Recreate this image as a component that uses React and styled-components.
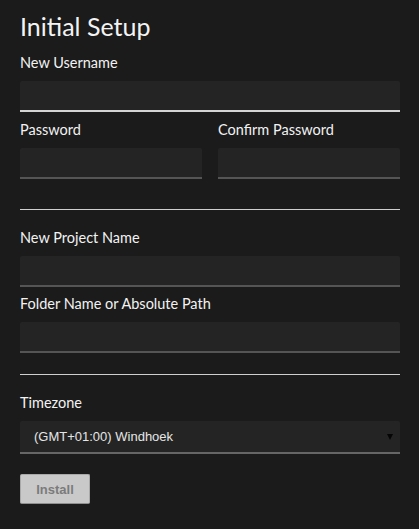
import React from "react"
import styled, { createGlobalStyle } from "styled-components"

const Global = createGlobalStyle`
  html, body {
    margin: 0;
    padding: 0;
    background: #1b1b1b;
  }
  body {
    font-family: Lato, "Open Sans", sans-serif;
    color: #f2f2f2;
  }
`

const Page = styled.div`
  padding: 11px 19px 24px 20px;
  display: flex;
  flex-direction: column;
`

const Title = styled.h1`
  margin: 0 0 13px;
  font-size: 25px;
  font-weight: 400;
  line-height: 30px;
  color: #f3f3f3;
`

const Field = styled.div`
  display: flex;
  flex-direction: column;
  flex: 1;
  margin-bottom: ${p => p.$mb || 0}px;
`

const Label = styled.label`
  font-size: 14.5px;
  line-height: 18px;
  margin-bottom: 9px;
  color: #f2f2f2;
`

const Input = styled.input`
  box-sizing: border-box;
  height: 31px;
  width: 100%;
  margin: 0;
  padding: 0 10px;
  border: 0;
  border-radius: 2px 2px 0 0;
  border-bottom: 2px solid ${p => (p.$focused ? "#d4d4d4" : "#555")};
  background: #242424;
  color: #eee;
  outline: none;
`

const Row = styled.div`
  display: flex;
  gap: 16px;
`

const Rule = styled.hr`
  border: 0;
  height: 1px;
  background: #cfcfcf;
  margin: ${p => p.$top}px 0 19px;
`

const SelectBox = styled.div`
  position: relative;
  box-sizing: border-box;
  height: 33px;
  background: #242424;
  border-bottom: 2px solid #666;
  border-radius: 2px 2px 0 0;
  display: flex;
  align-items: center;
  padding: 0 14px;
  font-family: "Liberation Sans", Arial, sans-serif;
  font-size: 13px;
  color: #e6e6e6;
`

const Arrow = styled.span`
  position: absolute;
  right: 7px;
  top: 13px;
  width: 0;
  height: 0;
  border-left: 3.5px solid transparent;
  border-right: 3.5px solid transparent;
  border-top: 6px solid #050505;
`

const Button = styled.button`
  margin-top: 20px;
  align-self: flex-start;
  width: 70px;
  height: 30px;
  background: #c9c9c9;
  border: 1px solid #a9a9a9;
  border-bottom-color: #8f8f8f;
  border-radius: 2px;
  font-family: "Liberation Sans", Arial, sans-serif;
  font-weight: 700;
  font-size: 13px;
  color: #7b7b7b;
  padding: 0;
`

export default function App() {
  return (
    <Page>
      <Global />
      <Title>Initial Setup</Title>
      <Field $mb={9}>
        <Label>New Username</Label>
        <Input $focused />
      </Field>
      <Row>
        <Field>
          <Label>Password</Label>
          <Input type="password" />
        </Field>
        <Field>
          <Label>Confirm Password</Label>
          <Input type="password" />
        </Field>
      </Row>
      <Rule $top={30} />
      <Field $mb={8}>
        <Label>New Project Name</Label>
        <Input />
      </Field>
      <Field>
        <Label>Folder Name or Absolute Path</Label>
        <Input />
      </Field>
      <Rule $top={21} />
      <Field>
        <Label>Timezone</Label>
        <SelectBox>
          (GMT+01:00) Windhoek
          <Arrow />
        </SelectBox>
      </Field>
      <Button disabled>Install</Button>
    </Page>
  )
}
